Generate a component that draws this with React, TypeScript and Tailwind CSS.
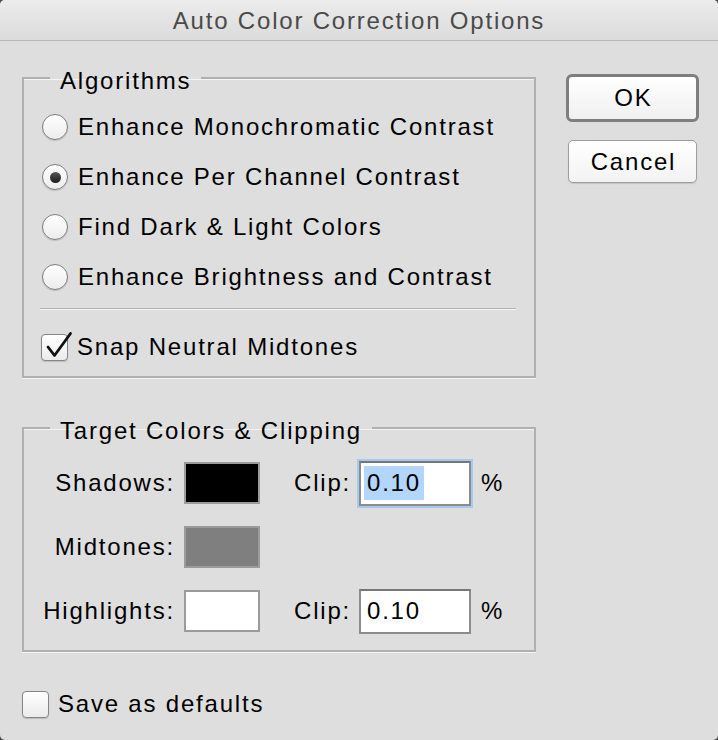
import React from 'react'

const font = "font-['Liberation_Sans',Arial,sans-serif]"

const Radio = ({ checked }: { checked?: boolean }) => (
  <span className="flex h-[26px] w-[26px] shrink-0 items-center justify-center rounded-full border-[1.5px] border-[#7e7e7e] bg-gradient-to-b from-white to-[#ececec] shadow-[0_1px_1px_rgba(0,0,0,0.15)]">
    {checked && <span className="h-[11px] w-[11px] rounded-full bg-gradient-to-b from-[#555] to-[#1f1f1f]" />}
  </span>
)

const Checkbox = ({ checked }: { checked?: boolean }) => (
  <span className="relative block h-[27px] w-[27px] shrink-0 rounded-[4px] border-[1.5px] border-[#858585] bg-gradient-to-b from-white to-[#ebebeb] shadow-[0_1px_1px_rgba(0,0,0,0.15)]">
    {checked && (
      <svg className="absolute left-0 top-[-3px] overflow-visible" width="30" height="28" viewBox="0 0 30 28">
        <path d="M6 15 L12.5 23.5 L28.5 1.5" fill="none" stroke="#111" strokeWidth="2.8" strokeLinecap="round" strokeLinejoin="round" />
      </svg>
    )}
  </span>
)

const Swatch = ({ color }: { color: string }) => (
  <span className={`block h-[42px] w-[76px] border-2 border-[#9b9b9b] ${color}`} />
)

const algorithms = [
  'Enhance Monochromatic Contrast',
  'Enhance Per Channel Contrast',
  'Find Dark & Light Colors',
  'Enhance Brightness and Contrast',
]

export default function App() {
  return (
    <div className={`h-[740px] w-[718px] overflow-hidden bg-[#4a4a4a] ${font}`}>
      <div className="h-full w-full rounded-[5px] bg-[#dedede] text-[24px] leading-[28px] tracking-[1.8px] text-black">
        {/* Title bar */}
        <div className="flex h-[41px] items-center justify-center rounded-t-[5px] border-b border-[#b7b7b7] bg-gradient-to-b from-[#ececec] to-[#dbdbdb] pt-[1px] text-[#4a4a4a]">
          Auto Color Correction Options
        </div>

        <div className="flex">
          {/* Left column */}
          <div className="ml-[22px] w-[514px] pt-[23px]">
            <fieldset className="border-2 border-[#b0b0b0] shadow-[0_1px_0_#f4f4f4,inset_0_1px_0_#f4f4f4]">
              <legend className="ml-[26px] px-[10px]">
                <span className="relative top-[3px]">Algorithms</span>
              </legend>
              <div className="pt-[10px]">
                {algorithms.map((a, i) => (
                  <div key={a} className="flex h-[50px] items-center gap-[10px] pl-[18px]">
                    <Radio checked={i === 1} />
                    <span>{a}</span>
                  </div>
                ))}
              </div>
              <div className="ml-[16px] mr-[18px] mt-[6px] h-px bg-[#b3b3b3] shadow-[0_1px_0_#f4f4f4]" />
              <div className="mt-[13px] flex h-[50px] items-center gap-[9px] pl-[17px]">
                <Checkbox checked />
                <span>Snap Neutral Midtones</span>
              </div>
              <div className="h-[4px]" />
            </fieldset>

            <fieldset className="mt-[36px] border-2 border-[#b0b0b0] shadow-[0_1px_0_#f4f4f4,inset_0_1px_0_#f4f4f4]">
              <legend className="ml-[26px] px-[10px]">
                <span className="relative top-[3px]">Target Colors &amp; Clipping</span>
              </legend>
              <div className="pb-[7px] pt-[9px]">
                <div className="flex h-[64px] items-center">
                  <span className="w-[151px] text-right">Shadows:</span>
                  <span className="ml-[9px]"><Swatch color="bg-black" /></span>
                  <span className="ml-[34px] w-[65px]">Clip:</span>
                  <span className="flex h-[45px] w-[112px] items-center border-2 border-[#8c8c8c] border-t-[#777] bg-white pl-[3px] shadow-[0_0_0_2px_#a8c9ef]">
                    <span className="bg-[#b3d6fd] px-[3px] leading-[34px]">0.10</span>
                  </span>
                  <span className="ml-[10px]">%</span>
                </div>
                <div className="flex h-[64px] items-center">
                  <span className="w-[151px] text-right">Midtones:</span>
                  <span className="ml-[9px]"><Swatch color="bg-[#7f7f7f]" /></span>
                </div>
                <div className="flex h-[64px] items-center">
                  <span className="w-[151px] text-right">Highlights:</span>
                  <span className="ml-[9px]"><Swatch color="bg-white" /></span>
                  <span className="ml-[34px] w-[65px]">Clip:</span>
                  <span className="flex h-[45px] w-[112px] items-center border-2 border-[#8c8c8c] border-t-[#777] bg-white pl-[6px]">
                    0.10
                  </span>
                  <span className="ml-[10px]">%</span>
                </div>
              </div>
            </fieldset>

            <div className="mt-[27px] flex h-[50px] items-center gap-[9px]">
              <Checkbox />
              <span>Save as defaults</span>
            </div>
          </div>

          {/* Right column */}
          <div className="ml-[30px] flex w-[133px] flex-col pt-[33px]">
            <button className="flex h-[48px] w-[133px] items-center justify-center rounded-[6px] border-[3px] border-[#7e7e7e] bg-gradient-to-b from-white to-[#f0f0f0] pl-[2px]">
              OK
            </button>
            <button className="ml-[2px] mt-[18px] flex h-[43px] w-[129px] items-center justify-center rounded-[5px] border border-[#9d9d9d] bg-gradient-to-b from-white to-[#f3f3f3] pl-[2px] shadow-[0_1px_1px_rgba(0,0,0,0.12)]">
              Cancel
            </button>
          </div>
        </div>
      </div>
    </div>
  )
}
